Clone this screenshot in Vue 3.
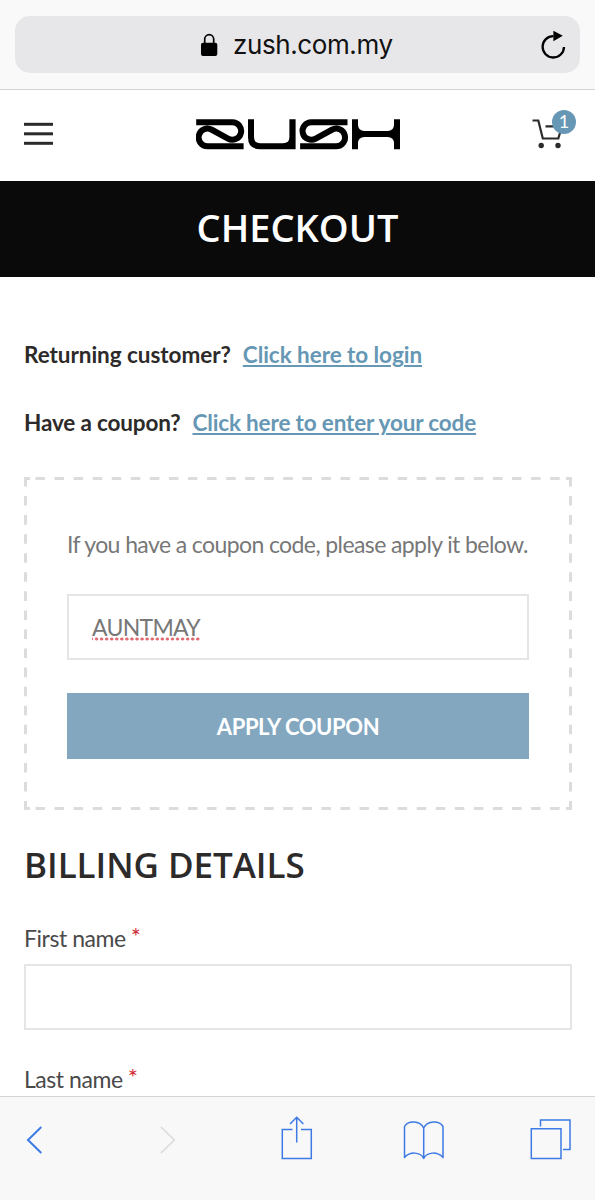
<script setup>
import { ref } from "vue";

const host = "zush.com.my";
const cartCount = ref(1);
const coupon = ref("AUNTMAY");

const notices = [
  { id: "login", question: "Returning customer?", link: "Click here to login" },
  { id: "coupon", question: "Have a coupon?", link: "Click here to enter your code" },
];

const fields = [
  { id: "first_name", label: "First name" },
  { id: "last_name", label: "Last name" },
];
</script>

<template>
  <div class="screen">
    <div class="address-bar">
      <div class="address">
        <span class="spacer"></span>
        <svg class="lock" width="18" height="24" viewBox="0 0 18 24">
          <path d="M4.7 11V6.2a4.5 4.5 0 0 1 9 0V11" fill="none" stroke="#000" stroke-width="1.7" />
          <rect x="1" y="9.8" width="16.3" height="13.2" rx="2" />
        </svg>
        <span class="host">{{ host }}</span>
        <svg class="reload" width="26" height="30" viewBox="0 0 26 30">
          <path d="M13.5 6.1A10.7 10.7 0 1 0 24 17" fill="none" stroke="#000" stroke-width="2.3" />
          <path d="M13.4 0.8L22.8 5.8L13.4 11.2Z" />
        </svg>
      </div>
    </div>

    <header class="site-header">
      <svg class="burger" width="29" height="24" viewBox="0 0 29 24" fill="#2d2a2a">
        <rect y="0.8" width="29" height="3" />
        <rect y="10.3" width="29" height="3" />
        <rect y="19.8" width="29" height="3" />
      </svg>

      <svg class="logo" width="205" height="32" viewBox="196 118 205 32">
        <g fill="none" stroke="#000" stroke-width="6">
          <path d="M196.2 122.2H232.3a8.8 8.8 0 1 1-4.3 16.45L211.8 129.75a8.8 8.8 0 1 0-4.3 16.45H243.6" />
          <path d="M347.5 122.2H311.4a8.8 8.8 0 1 0 4.3 16.45L331.9 129.75a8.8 8.8 0 1 1 4.3 16.45H300.1" />
        </g>
        <path d="M248 119.2H254V137q0 6.2 6.2 6.2H283q6.4 0 6.4-6.2V119.2H295.6V149.2H260q-12 0-12-12Z" />
        <path d="M352 119.2H358V124.5q0 6.5 6.5 6.5H387.5q6.5 0 6.5-6.5V119.2H400V149.2H394V143.6q0-6.5-6.5-6.5H364.5q-6.5 0-6.5 6.5V149.2H352Z" />
      </svg>

      <div class="cart">
        <svg width="32" height="30" viewBox="0 0 32 30">
          <path d="M0.5 1.5H6.3L10.8 19.5H26.3L30 7.3H13.5" fill="none" stroke="#2d2a2a" stroke-width="2.2" />
          <circle cx="9.2" cy="26.5" r="2.7" fill="#2d2a2a" />
          <circle cx="26" cy="26.5" r="2.7" fill="#2d2a2a" />
        </svg>
        <span class="cart-count">{{ cartCount }}</span>
      </div>
    </header>

    <div class="page-title">
      <h1>Checkout</h1>
    </div>

    <main class="content">
      <p v-for="notice in notices" :key="notice.id" class="notice" :class="notice.id">
        <span>{{ notice.question }}</span>
        <a href="#" @click.prevent>{{ notice.link }}</a>
      </p>

      <form class="coupon-box" @submit.prevent>
        <svg class="dashes" width="548" height="333" fill="none" stroke="#dcdcdc" stroke-width="3">
          <path d="M0 1.5H548M0 331.5H548" stroke-dasharray="9.53 9.53" stroke-dashoffset="-11.5" />
          <path d="M1.5 0V333M546.5 0V333" stroke-dasharray="9.53 9.53" />
          <path d="M0 1.5H6M542 1.5H548M0 331.5H6M542 331.5H548" />
        </svg>
        <p class="coupon-hint">If you have a coupon code, please apply it below.</p>
        <div class="input coupon-input"><span class="misspelled">{{ coupon }}</span></div>
        <button type="submit" class="apply">Apply coupon</button>
      </form>

      <h2>Billing details</h2>

      <div v-for="field in fields" :key="field.id" class="field">
        <label :for="field.id">{{ field.label }}<abbr>*</abbr></label>
        <input :id="field.id" class="input" type="text" />
      </div>
    </main>

    <nav class="toolbar">
      <svg width="595" height="103" viewBox="0 1097 595 103" fill="none" stroke="#3d7ae5" stroke-width="1.5">
        <path d="M41.3 1127L28 1140L41.3 1153" stroke-width="2" />
        <path d="M161 1127L174.3 1140L161 1153" stroke="#d9d9d9" />
        <path d="M292.5 1129.5H282.3V1158.5H311.3V1129.5H301M296.7 1142.5V1117.5M290 1124L296.7 1117.3L303.4 1124" />
        <path d="M423.7 1158.5V1128C420 1120.3 408 1120.3 404.5 1126.5V1157.5C410 1151.5 420 1151.5 423.7 1158.5C427.4 1151.5 437.4 1151.5 443 1157.5V1126.5C439.4 1120.3 427.4 1120.3 423.7 1128" stroke-linejoin="round" />
        <path d="M531.3 1128.7H561V1158.5H531.3ZM540.5 1126.5V1120H570V1149.5H563" />
      </svg>
    </nav>
  </div>
</template>

<style>
body {
  overflow: hidden;
  background: #fff;
}
</style>

<style scoped>
.screen {
  display: flex;
  flex-direction: column;
  height: 1200px;
  overflow: hidden;
  font-family: Lato, sans-serif;
  color: #2d2a2a;
}

.screen * {
  box-sizing: border-box;
}

.address-bar {
  flex: none;
  height: 90px;
  padding: 16px 15px;
  background: #f9f9f9;
  border-bottom: 1px solid #d5d5d6;
}

.address {
  display: grid;
  grid-template-columns: 185px 18px 1fr 26px;
  align-items: center;
  height: 57px;
  padding-right: 14px;
  border-radius: 15px;
  background: #e7e7e9;
}

.host {
  padding-left: 15px;
  font-family: Inter, sans-serif;
  font-size: 26px;
  letter-spacing: -0.4px;
  line-height: 32px;
  color: #111;
}

.site-header {
  display: flex;
  flex: none;
  align-items: center;
  justify-content: space-between;
  height: 91px;
  padding: 0 31px 4px 24px;
  background: #fff;
}

.logo {
  margin-left: 12px;
}

.cart {
  position: relative;
  height: 30px;
}

.cart svg {
  display: block;
}

.cart-count {
  position: absolute;
  top: -9px;
  right: -12px;
  width: 24px;
  height: 24px;
  border-radius: 50%;
  background: #6697b4;
  color: #fff;
  font-size: 18px;
  line-height: 23px;
  text-align: center;
}

.page-title {
  flex: none;
  height: 96px;
  background: #0a0a0a;
}

h1,
h2 {
  margin: 0;
  font-family: "Open Sans", sans-serif;
  font-weight: 600;
  text-transform: uppercase;
}

h1 {
  color: #fff;
  font-size: 38px;
  line-height: 92px;
  text-align: center;
}

.content {
  flex: 1;
  min-height: 0;
  padding: 61px 23px 0 24px;
  overflow: hidden;
}

.notice {
  display: flex;
  gap: 12px;
  margin: 0 0 34px;
  font-size: 22.5px;
  font-weight: 700;
  letter-spacing: -0.05px;
  line-height: 34px;
  white-space: nowrap;
}

.notice.coupon {
  letter-spacing: -0.15px;
}

.notice a {
  color: #6697b4;
  text-decoration: underline;
  text-decoration-thickness: 2px;
  text-underline-offset: 2px;
}

.coupon-box {
  position: relative;
  height: 333px;
  margin-top: 37px;
  padding: 49px 43px 0;
}

.dashes {
  position: absolute;
  inset: 0;
}

.coupon-hint {
  margin: 0 -10px 31px 0;
  color: #777;
  font-size: 23px;
  letter-spacing: -0.6px;
  line-height: 37px;
  white-space: nowrap;
}

.input {
  display: block;
  width: 100%;
  height: 66px;
  border: 2px solid #e5e5e5;
  background: #fff;
}

.coupon-input {
  padding: 16px 23px;
  color: #777;
  font-size: 23px;
  letter-spacing: -0.7px;
  line-height: 30px;
}

.misspelled {
  display: inline-block;
  background: radial-gradient(circle, #e0696f 1.3px, transparent 1.8px) 2px 25px / 5.07px 4px repeat-x;
}

.apply {
  display: block;
  width: 100%;
  height: 66px;
  margin-top: 33px;
  padding: 0;
  border: 0;
  background: #82a7bf;
  color: #fff;
  font-family: inherit;
  font-size: 22px;
  font-weight: 700;
  letter-spacing: -0.4px;
  text-transform: uppercase;
}

h2 {
  margin-top: 30px;
  font-size: 35px;
  letter-spacing: -0.05px;
  line-height: 50px;
}

.field {
  margin-top: 31px;
}

.field + .field {
  margin-top: 32px;
}

.field label {
  display: block;
  height: 43px;
  color: #4a4a4a;
  font-size: 23px;
  letter-spacing: -0.45px;
  line-height: 34px;
}

.field abbr {
  margin-left: 5px;
  color: #d02e3a;
  font-size: 24px;
  line-height: 1;
  vertical-align: 2px;
}

.toolbar {
  flex: none;
  height: 104px;
  border-top: 1px solid #d5d5d6;
  background: #f8f8f8;
}

.toolbar svg {
  display: block;
}
</style>
